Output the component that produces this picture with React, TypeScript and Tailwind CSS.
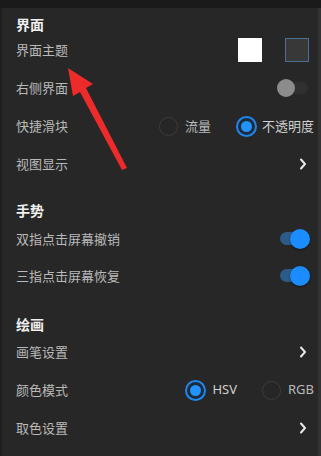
import React from "react";

const font = { fontFamily: '"Noto Sans CJK SC", "Noto Sans", sans-serif' };

function Chevron() {
  return (
    <svg width="8" height="12" viewBox="0 0 8 12" className="mr-[7px]">
      <polyline points="2,1.5 6,6 2,10.5" fill="none" stroke="#e8e8e8" strokeWidth="2" strokeLinecap="round" strokeLinejoin="round" />
    </svg>
  );
}

function Radio({ on }: { on: boolean }) {
  if (on)
    return (
      <div className="w-[21px] h-[21px] rounded-full border-2 border-[#1f86ee] flex items-center justify-center bg-[#1d2a38]">
        <div className="w-[11px] h-[11px] rounded-full bg-[#2292ff]" />
      </div>
    );
  return <div className="w-[19px] h-[19px] rounded-full border border-[#3c3c3c] bg-[#262626]" />;
}

function Toggle({ on }: { on: boolean }) {
  if (on)
    return (
      <div className="relative w-[30px] h-[20px] flex items-center mr-[4px]">
        <div className="w-[26px] h-[13px] rounded-full bg-[#2d5b87]" />
        <div className="absolute right-0 top-0 w-[20px] h-[20px] rounded-full bg-[#1a8cff] shadow-[0_1px_2px_rgba(0,0,0,0.5)]" />
      </div>
    );
  return (
    <div className="relative w-[31px] h-[18px] flex items-center mr-[6px]">
      <div className="ml-[8px] w-[23px] h-[12px] rounded-full bg-[#303030]" />
      <div className="absolute left-0 top-0 w-[18px] h-[18px] rounded-full bg-[#8c8c8c]" />
    </div>
  );
}

function Row({ label, h, children }: { label: string; h: string; children?: React.ReactNode }) {
  return (
    <div className={`flex items-center justify-between ${h}`}>
      <span className="text-[13px] text-[#b9b9b9] leading-[18px]">{label}</span>
      <div className="flex items-center">{children}</div>
    </div>
  );
}

function Heading({ label, pt, h }: { label: string; pt: string; h: string }) {
  return (
    <div className={`${h} ${pt}`}>
      <div className="text-[14px] font-bold text-[#f0f0f0] leading-[18px]">{label}</div>
    </div>
  );
}

export default function App() {
  return (
    <div className="relative w-[321px] h-[456px] bg-[#272727] overflow-hidden flex flex-col" style={font}>
      <div className="h-[8px] bg-[#1a1a1a] shrink-0" />
      <div className="flex-1 flex border-l-[2px] border-[#1e1e1e] border-r-[3px] border-r-[#333]">
        <div className="flex-1 pl-[14px] pr-[4px] flex flex-col">
          <Heading label="界面" pt="pt-[7px]" h="h-[23px]" />
          <Row label="界面主题" h="h-[38px]">
            <div className="w-[24px] h-[24px] bg-white mr-[23px]" />
            <div className="w-[24px] h-[24px] bg-[#383838] border border-[#4d6f94] mr-[5px]" />
          </Row>
          <Row label="右侧界面" h="h-[38px]">
            <Toggle on={false} />
          </Row>
          <Row label="快捷滑块" h="h-[38px]">
            <Radio on={false} />
            <span className="ml-[7px] text-[13px] text-[#b9b9b9]">流量</span>
            <div className="ml-[25px]">
              <Radio on={true} />
            </div>
            <span className="ml-[5px] text-[13px] text-[#d0d0d0]">不透明度</span>
          </Row>
          <Row label="视图显示" h="h-[38px]">
            <Chevron />
          </Row>
          <Heading label="手势" pt="pt-[18px]" h="h-[37px]" />
          <Row label="双指点击屏幕撤销" h="h-[37px]">
            <Toggle on={true} />
          </Row>
          <Row label="三指点击屏幕恢复" h="h-[37px]">
            <Toggle on={true} />
          </Row>
          <Heading label="绘画" pt="pt-[21px]" h="h-[39px]" />
          <Row label="画笔设置" h="h-[38px]">
            <Chevron />
          </Row>
          <Row label="颜色模式" h="h-[38px]">
            <Radio on={true} />
            <span className="ml-[6px] text-[13px] text-[#d0d0d0]" style={{ fontFamily: '"Noto Sans", sans-serif' }}>HSV</span>
            <div className="ml-[25px]">
              <Radio on={false} />
            </div>
            <span className="ml-[7px] text-[13px] text-[#b9b9b9]" style={{ fontFamily: '"Noto Sans", sans-serif' }}>RGB</span>
          </Row>
          <Row label="取色设置" h="h-[38px]">
            <Chevron />
          </Row>
        </div>
      </div>
      <svg className="absolute left-0 top-0 pointer-events-none" width="321" height="456" viewBox="0 0 321 456">
        <polygon points="68,68 93,84 86,88 127,168 122,170 80,92 73,96" fill="#ee2b2b" />
      </svg>
    </div>
  );
}
